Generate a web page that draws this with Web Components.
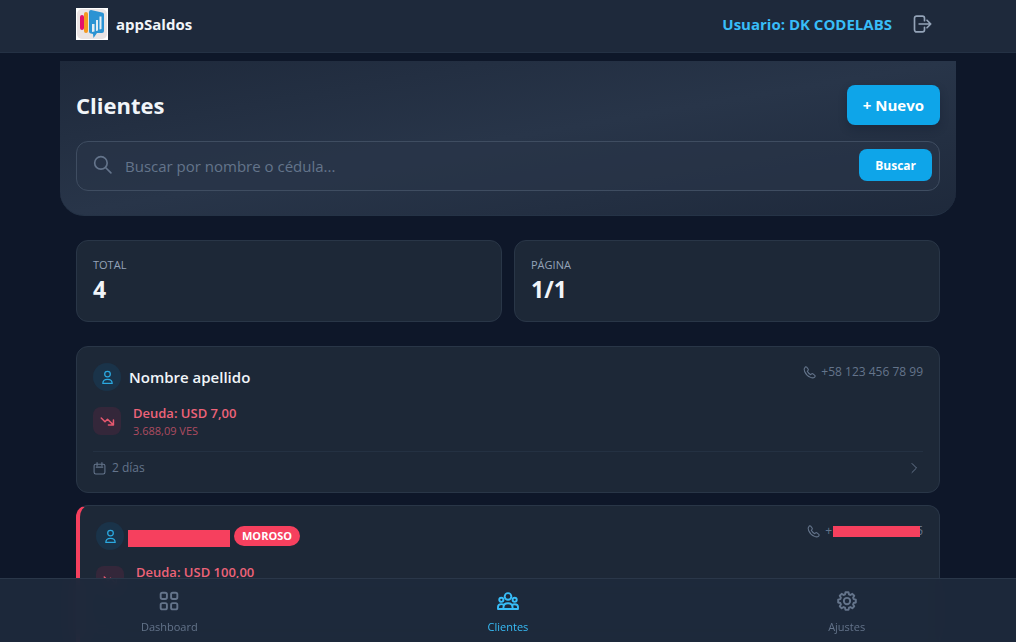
<!DOCTYPE html>
<html lang="es">
<head>
<meta charset="utf-8">
<meta name="viewport" content="width=device-width, initial-scale=1">
<title>appSaldos – Clientes</title>
<style>
  html { scrollbar-width: none; }
  body {
    margin: 0;
    min-height: 100vh;
    background: #0e1729;
    color: #f1f5f9;
    font-family: "Open Sans", "Noto Sans", sans-serif;
    --surface: #1e293b;
    --card: #1d2837;
    --line: #293647;
    --muted: #94a3b8;
    --dim: #64748b;
    --sky: #38bdf8;
    --brand: #0ea5e9;
    --rose: #f6405e;
    --page: 896px;
  }
</style>
</head>
<body>
<app-shell>
  <app-header slot="header" user="DK CODELABS">appSaldos</app-header>
  <search-hero>Clientes</search-hero>
  <stat-row>
    <stat-card label="TOTAL">4</stat-card>
    <stat-card label="PÁGINA">1/1</stat-card>
  </stat-row>
  <client-list>
    <client-card debt="USD 7,00" local="3.688,09 VES" days="2 días">
      <span slot="name">Nombre apellido</span>
      <span slot="phone">+58 123 456 78 99</span>
    </client-card>
    <client-card overdue debt="USD 100,00">
      <hidden-text slot="name" kind="name"></hidden-text>
      <hidden-text slot="phone" kind="phone"></hidden-text>
    </client-card>
  </client-list>
  <bottom-nav slot="nav"></bottom-nav>
</app-shell>

<script>
const ICONS = {
  logout: '<path d="M15 8V5a2.500 2.500 0 0 0-2.500-2.500h-7A2.500 2.500 0 0 0 3 5v14a2.500 2.500 0 0 0 2.500 2.500h7A2.500 2.500 0 0 0 15 19v-3M8.500 12h14M18 7.500l4.500 4.500-4.500 4.500"/>',
  search: '<circle cx="9.500" cy="9.500" r="7.500"/><path d="M15.300 15.300 21.500 21.500"/>',
  person: '<circle cx="12" cy="6.500" r="4.500"/><path d="M4.500 21.500c0-4.200 2.600-6.500 7.500-6.500s7.500 2.300 7.500 6.500z"/>',
  trend: '<path d="M2 6.500l6 6 4-4 9 8.500M21.500 9.500v8h-8"/>',
  calendar: '<rect x="2" y="4" width="20" height="18" rx="3"/><path d="M7.500 1v6M16.500 1v6M6 9.500h12"/>',
  chevron: '<path d="M8 3l9 9-9 9"/>',
  phone: '<path d="M6.800 2.200c-1-.9-2.300-.7-3.200.3C1.800 4.300 1.700 7 3 10c2 4.700 6.300 9 11 11 3 1.300 5.700 1.200 7.500-.6 1-.9 1.200-2.200.3-3.200l-3.300-2.600c-.9-.7-1.900-.6-2.700.1l-1.500 1.400c-2.500-1.300-5.100-3.900-6.400-6.400l1.400-1.500c.7-.8.8-1.800.1-2.700z"/>',
  grid: '<rect x="2" y="2" width="7.500" height="7.500" rx="2"/><rect x="14.500" y="2" width="7.500" height="7.500" rx="2"/><rect x="2" y="14.500" width="7.500" height="7.500" rx="2"/><rect x="14.500" y="14.500" width="7.500" height="7.500" rx="2"/>',
  people: '<circle cx="12" cy="6.500" r="4"/><circle cx="4" cy="10.500" r="2.500"/><circle cx="20" cy="10.500" r="2.500"/><path d="M6.500 21.500v-1.500c0-3.400 2.200-5.200 5.500-5.200s5.500 1.800 5.500 5.200v1.500zM6.500 21.500H0v-2.200C0 17 1.600 15.800 4 15.800c1 0 2 .2 2.900.8M17.500 21.500H24v-2.200c0-2.300-1.600-3.500-4-3.500-1 0-2 .2-2.900.8"/>',
  gear: '<circle cx="12" cy="12" r="3.800"/><path d="M10.200 1.500h3.600l.6 2.600 1.700.7L18.400 3.400l2.300 2.300-1.400 2.300.7 1.700 2.600.6v3.500l-2.600.6-.7 1.700 1.400 2.300-2.300 2.300-2.300-1.400-1.700.7-.6 2.600h-3.600l-.6-2.600-1.700-.7-2.300 1.400-2.300-2.300 1.400-2.300-.7-1.700-2.600-.6v-3.500l2.600-.6.700-1.700-1.400-2.300 2.300-2.300 2.300 1.400 1.700-.7z"/>'
};

function define(name, render, styles) {
  customElements.define(name, class extends HTMLElement {
    connectedCallback() {
      if (this.shadowRoot) return;
      const tpl = document.createElement('template');
      tpl.innerHTML = `<style>*{box-sizing:border-box}${styles}</style>${render(this)}`;
      this.attachShadow({ mode: 'open' }).append(tpl.content.cloneNode(true));
    }
  });
}

define('ui-icon', el => `<svg viewBox="0 0 24 24" aria-hidden="true">${ICONS[el.getAttribute('name')]}</svg>`, `
  :host { display: block; flex: none; width: var(--size, 20px); height: var(--size, 20px); }
  svg { display: block; width: 100%; height: 100%; fill: none; stroke: currentColor;
        stroke-width: var(--stroke, 2); stroke-linecap: round; stroke-linejoin: round; overflow: visible; }
`);

define('app-logo', () => `
  <svg viewBox="0 0 32 32" aria-hidden="true">
    <rect width="32" height="32" fill="#fff"/>
    <rect x="1" y="1" width="30" height="30" rx="5" fill="#eae4e4"/>
    <rect x="4" y="7" width="4" height="15" rx="2" fill="#e4106c"/>
    <rect x="8" y="4" width="4" height="21" rx="2" fill="#f49a22"/>
    <path d="M15 2l11 2.500a2 2 0 0 1 2 2V23a2 2 0 0 1-2 2h-5l-3.500 5-.5-4-2-.5a2 2 0 0 1-2-2V4a2 2 0 0 1 2-2z" fill="#2b93d3"/>
    <path d="M16 16h2.500v7.500L16 24zM20 12h2v10.500l-2 .5zM23.500 8.500h2V21l-2 .5z" fill="#e4edf3"/>
  </svg>`, `
  :host { display: block; flex: none; width: 32px; height: 32px; }
  svg { display: block; }
`);

define('app-shell', () => `
  <slot name="header"></slot><main><slot></slot></main><slot name="nav"></slot>`, `
  :host { display: block; }
  main { max-width: var(--page); margin: 0 auto; padding: 8px 0 80px; }
`);

define('app-header', el => `
  <header><div class="bar">
    <a class="brand" href="#inicio"><app-logo></app-logo><slot></slot></a>
    <div class="user"><span>Usuario: ${el.getAttribute('user')}</span>
    <button type="button" aria-label="Cerrar sesión"><ui-icon name="logout"></ui-icon></button></div>
  </div></header>`, `
  :host { display: block; }
  header { background: var(--surface); border-bottom: 1px solid #243144; }
  .bar { max-width: var(--page); margin: 0 auto; padding: 0 16px 4px; height: 52px;
         display: flex; align-items: center; justify-content: space-between; }
  .brand { display: flex; align-items: center; gap: 8px; color: #f1f5f9; text-decoration: none;
           font-size: 15px; font-weight: 700; line-height: 24px; }
  .user { display: flex; align-items: center; gap: 12px; color: var(--sky); font-size: 15px; font-weight: 700; }
  button { display: block; padding: 8px; border: 0; background: none; color: var(--muted); --size: 20px; }
`);

define('search-hero', () => `
  <section>
    <div class="top"><h1><slot></slot></h1><button type="button" class="new">+ Nuevo</button></div>
    <form role="search" onsubmit="return false">
      <ui-icon name="search"></ui-icon>
      <input type="search" aria-label="Buscar cliente" placeholder="Buscar por nombre o cédula...">
      <button class="go">Buscar</button>
    </form>
  </section>`, `
  :host { display: block; }
  section { padding: 24px 16px; border-radius: 0 0 24px 24px; border-bottom: 1px solid #253346;
            background: linear-gradient(to bottom right, #1e293b, #283549 50%, #1e293b); }
  .top { display: flex; align-items: center; justify-content: space-between; height: 40px; }
  h1 { margin: 0; font-size: 22px; line-height: 32px; font-weight: 700; }
  button { border: 0; color: #fff; background: var(--brand); font-family: inherit; font-weight: 700; }
  .new { height: 40px; padding: 0 16px; border-radius: 8px; font-size: 15px; box-shadow: 0 4px 8px #0f172a55; }
  form { display: flex; align-items: center; height: 50px; margin-top: 16px; padding: 0 7px 2px 16px;
         border: 1px solid #3f4d61; border-radius: 12px; background: #283548aa; }
  ui-icon { --size: 20px; color: var(--dim); }
  input { flex: 1; min-width: 0; margin: 0; padding: 2px 12px 0; border: 0; outline: 0; background: none;
          font-family: inherit; font-size: 15px; line-height: 24px; color: inherit; appearance: none; }
  input::placeholder { color: var(--dim); opacity: 1; }
  .go { height: 32px; padding: 0 16px; border-radius: 8px; font-size: 12px; }
`);

define('stat-row', () => `<slot></slot>`, `
  :host { display: grid; grid-template-columns: 1fr 1fr; gap: 12px; padding: 24px 16px; }
`);

define('stat-card', el => `<div class="label">${el.getAttribute('label')}</div><div class="value"><slot></slot></div>`, `
  :host { display: block; padding: 16px; border: 1px solid var(--line); border-radius: 12px; background: var(--card); }
  .label { font-size: 11px; line-height: 16px; color: var(--muted); }
  .value { font-size: 23px; line-height: 32px; font-weight: 700; }
`);

define('client-list', () => `<slot></slot>`, `
  :host { display: grid; gap: 12px; padding: 0 16px; }
`);

define('hidden-text', el => el.getAttribute('kind') === 'phone'
  ? `<span>+</span><span class="bar phone"></span><span class="tail">5</span>`
  : `<span class="bar name"></span>`, `
  :host { display: flex; align-items: center; }
  .bar { background: var(--rose); position: relative; z-index: 1; }
  .name { width: 102px; height: 17px; margin: 4px 0 0 -4px; }
  .phone { width: 87px; height: 11px; margin-left: 1px; }
  .tail { margin-left: -4px; }
`);

define('client-card', el => `
  <article>
    <div class="top">
      <div class="who"><span class="avatar"><ui-icon name="person"></ui-icon></span>
        <h2><slot name="name"></slot></h2>${el.hasAttribute('overdue') ? '<span class="tag">MOROSO</span>' : ''}</div>
      <div class="phone"><ui-icon name="phone"></ui-icon><slot name="phone"></slot></div>
    </div>
    <div class="debt"><span class="mark"><ui-icon name="trend"></ui-icon></span>
      <div><div class="main">Deuda: ${el.getAttribute('debt')}</div><div class="local">${el.getAttribute('local') || ''}</div></div></div>
    <footer><ui-icon name="calendar"></ui-icon><span>${el.getAttribute('days') || ''}</span><ui-icon class="go" name="chevron"></ui-icon></footer>
  </article>`, `
  :host { display: block; }
  article { padding: 16px 16px 12px; border: 1px solid var(--line); border-radius: 12px; background: var(--card); }
  :host([overdue]) article { border-left: 4px solid var(--rose); }
  .top { display: flex; justify-content: space-between; align-items: flex-start; }
  .who { display: flex; align-items: center; height: 28px; }
  .avatar, .mark { display: grid; place-items: center; width: 28px; height: 28px; flex: none; }
  .avatar { border-radius: 50%; background: #1a3349; color: #2ba9e0; --size: 15px; }
  h2 { margin: 0 0 0 8px; font-size: 15px; line-height: 24px; font-weight: 600; }
  .tag { margin-left: 4px; padding: 0 8px; border-radius: 10px; background: var(--rose); color: #fff;
         font-size: 11px; line-height: 20px; font-weight: 700; }
  .phone { display: flex; align-items: center; gap: 5px; height: 18px; color: var(--dim);
           font-size: 12px; line-height: 16px; --size: 13px; }
  .debt { display: flex; align-items: center; gap: 12px; margin-top: 12px; height: 36px; }
  .mark { border-radius: 8px; background: #34273a; color: #e5586f; --size: 15px; --stroke: 2.4; }
  .main { font-size: 13px; line-height: 20px; font-weight: 600; color: #ed6379; }
  .local { font-size: 11px; line-height: 16px; min-height: 16px; color: #ad4c61; }
  footer { display: flex; align-items: center; gap: 6px; margin-top: 12px; padding-top: 4px; height: 29px;
           border-top: 1px solid #243142; color: var(--dim); font-size: 12px; line-height: 16px; --size: 13px; }
  .go { margin: 0 3px 0 auto; --size: 12px; }
`);

define('bottom-nav', () => `
  <nav aria-label="Principal">
    <a href="#dashboard"><ui-icon name="grid"></ui-icon>Dashboard</a>
    <a href="#clientes" aria-current="page"><ui-icon name="people"></ui-icon>Clientes</a>
    <a href="#ajustes"><ui-icon name="gear"></ui-icon>Ajustes</a>
  </nav>`, `
  :host { display: block; position: fixed; left: 0; right: 0; bottom: 0; z-index: 5; }
  nav { display: grid; grid-template-columns: repeat(3, 1fr); height: 64px; border-top: 1px solid #2a3749;
        background: rgba(30, 41, 59, .95); backdrop-filter: blur(8px); }
  a { display: flex; flex-direction: column; align-items: center; justify-content: center; gap: 8px; padding-top: 4px;
      color: var(--dim); font-size: 11px; line-height: 16px; text-decoration: none; --size: 20px; --stroke: 2.3; }
  a[aria-current] { color: var(--sky); }
`);
</script>
</body>
</html>
